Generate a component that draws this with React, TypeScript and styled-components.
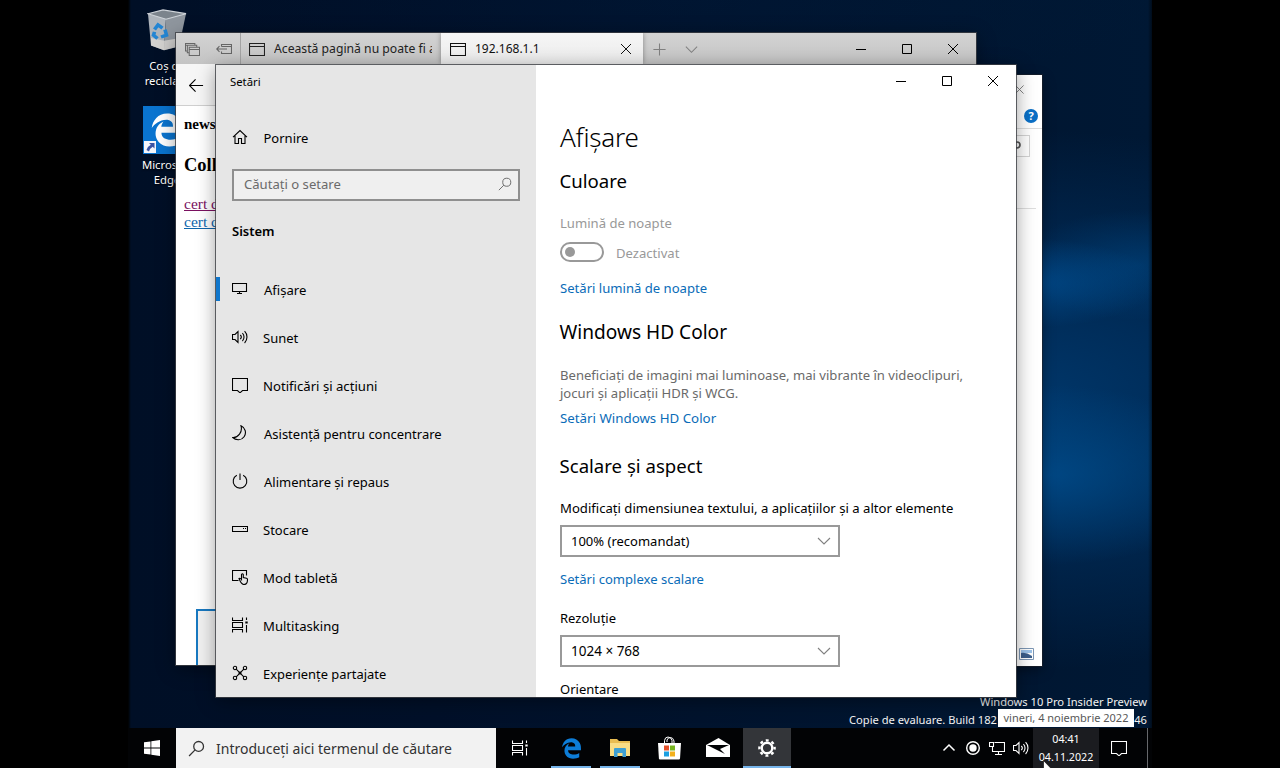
import React from "react";
import styled, { createGlobalStyle, css } from "styled-components";
import { FaEdgeLegacy } from "react-icons/fa6";

const Global = createGlobalStyle`
  * { box-sizing: border-box; }
  body { margin: 0; background: #000; overflow: hidden; }
  body, button, input { font-family: "Noto Sans", "Open Sans", sans-serif; font-size: 13px; }
`;

const Screen = styled.div`
  display: flex;
  justify-content: center;
  width: 1280px;
  height: 768px;
  background: #000;
`;

const Desktop = styled.main`
  position: relative;
  display: flex;
  flex-direction: column;
  justify-content: flex-end;
  width: 1024px;
  height: 768px;
  overflow: hidden;
  background:
    linear-gradient(90deg, #000 0, transparent 3px, transparent 1020px, rgba(0, 0, 0, 0.5) 1024px),
    radial-gradient(130px 45px at 900px 283px, rgba(0, 88, 162, 0.6), transparent),
    radial-gradient(120px 55px at 1010px 265px, rgba(0, 74, 136, 0.5), transparent),
    radial-gradient(190px 90px at 920px 475px, rgba(0, 84, 152, 0.65), transparent),
    radial-gradient(480px 270px at 900px 400px, rgba(0, 58, 112, 0.9), rgba(0, 50, 100, 0.6) 50%, transparent),
    radial-gradient(500px 90px at 560px 0, rgba(0, 32, 70, 0.2), transparent),
    linear-gradient(90deg, #000f26, #001029 30%, #001834 100%);
`;

const Shortcut = styled.div<{ $top: number }>`
  position: absolute;
  left: 2px;
  top: ${(p) => p.$top}px;
  width: 74px;
  display: flex;
  flex-direction: column;
  align-items: center;
  color: #fff;
  font-size: 11.3px;
  line-height: 15px;
  text-align: center;
  text-shadow: 0 1px 2px #000;
`;

const ShortcutArt = styled.div<{ $drop?: number }>`
  display: flex;
  justify-content: center;
  position: relative;
  width: 48px;
  height: 48px;
  padding-top: ${(p) => p.$drop ?? 0}px;
  margin-bottom: 3px;
`;

const EdgeTile = styled.div`
  width: 48px;
  height: 48px;
  display: flex;
  align-items: center;
  justify-content: center;
  background: #0a74cf;
  color: #fff;
`;

const LinkBadge = styled.div`
  position: absolute;
  left: 1px;
  bottom: 1px;
  width: 12px;
  height: 12px;
  display: flex;
  background: #f4f6fa;
`;

const Window = styled.section<{ $x: number; $y: number; $w: number; $h: number }>`
  position: absolute;
  left: ${(p) => p.$x}px;
  top: ${(p) => p.$y}px;
  width: ${(p) => p.$w}px;
  height: ${(p) => p.$h}px;
  overflow: hidden;
  display: flex;
  flex-direction: column;
  background: #fff;
  color: #000;
  box-shadow: 0 0 0 1px rgba(60, 63, 68, 0.8), 0 4px 18px rgba(0, 0, 0, 0.4);
`;

const BackWindow = styled(Window)`
  align-items: flex-end;
  box-shadow: 0 0 0 1px rgba(30, 34, 40, 0.6), 0 4px 12px rgba(0, 0, 0, 0.4);
`;

const PickerCaption = styled.div`
  height: 28px;
  padding: 8px 16px 0 0;
  color: #777;
  line-height: 0;
`;

const PickerHelp = styled.div`
  height: 26px;
  width: 100%;
  padding: 6px 4px 0;
  display: flex;
  justify-content: flex-end;
  border-bottom: 1px solid #dcdcdc;
`;

const HelpDot = styled.span`
  width: 14px;
  height: 14px;
  border-radius: 50%;
  background: #0a6fc6;
  color: #fff;
  font-weight: 700;
  font-size: 11px;
  line-height: 14px;
  text-align: center;
`;

const PickerSearch = styled.div`
  width: 200px;
  height: 22px;
  margin: 6px 12px 0 0;
  padding: 5px 8px 0 0;
  display: flex;
  justify-content: flex-end;
  border: 1px solid #d4d4d4;
`;

const PickerRule = styled.div`
  width: 220px;
  height: 52px;
  margin-right: 6px;
  border-bottom: 1px solid #dedede;
`;

const PickerFooter = styled.div`
  margin: auto 8px 6px 0;
  display: flex;
`;

const TabStrip = styled.div`
  height: 31px;
  flex: none;
  display: flex;
  background: linear-gradient(#d3d3d3, #c4c4c4);
`;

const StripTools = styled.div`
  width: 65px;
  display: flex;
  align-items: center;
  justify-content: space-between;
  padding: 1px 8px 0 9px;
  border-right: 1px solid #a3a3a3;
  color: #666;
`;

const Tab = styled.div<{ $active?: boolean }>`
  display: flex;
  align-items: center;
  width: ${(p) => (p.$active ? 202 : 200)}px;
  padding: 0 9px 0 ${(p) => (p.$active ? 9 : 8)}px;
  background: ${(p) => (p.$active ? "linear-gradient(#f6f6f6, #ebebeb)" : "transparent")};
  box-shadow: ${(p) => (p.$active ? "0 0 5px rgba(0, 0, 0, 0.35)" : "none")};
  color: ${(p) => (p.$active ? "#111" : "#222")};
`;

const TabTitle = styled.span<{ $size: number }>`
  flex: 1;
  margin: 0 0 1px 9px;
  font-size: ${(p) => p.$size}px;
  white-space: nowrap;
  overflow: hidden;
`;

const StripActions = styled.div`
  flex: 1;
  display: flex;
  align-items: center;
  gap: 17px;
  padding: 1px 0 0 9px;
  color: #808080;
`;

const CaptionButtons = styled.div`
  display: flex;
  align-items: center;
  height: 32px;
`;

const CaptionButton = styled.span`
  width: 46px;
  display: flex;
  justify-content: center;
`;

const EdgeToolbar = styled.div`
  height: 42px;
  flex: none;
  padding: 14px 0 0 13px;
  background: #f6f6f6;
  border-bottom: 1px solid #cfcfcf;
`;

const Page = styled.div`
  flex: 1;
  display: flex;
  flex-direction: column;
  align-items: flex-start;
  padding: 8px 8px 0;
  font-family: "Liberation Serif", serif;
`;

const PageLead = styled.strong`
  font-size: 15px;
  line-height: 20px;
`;

const PageTitle = styled.h2`
  margin: 20px 0 19px;
  font-size: 18.5px;
  line-height: 22px;
`;

const PageLink = styled.a<{ $visited?: boolean }>`
  font-size: 15.5px;
  line-height: 18px;
  text-decoration: underline;
  color: ${(p) => (p.$visited ? "#7a1060" : "#0f66ac")};
`;

const PageFrame = styled.div`
  width: 500px;
  height: 56px;
  margin: auto 0 0 12px;
  border: 2px solid #1878c0;
  border-bottom: 0;
  background: #f1f1f1;
`;

const Split = styled.div`
  flex: 1;
  display: flex;
  min-height: 0;
`;

const Nav = styled.nav`
  width: 320px;
  background: #e6e6e6;
  display: flex;
  flex-direction: column;
`;

const NavTitle = styled.div`
  height: 49px;
  flex: none;
  padding: 8px 14px 0;
  font-size: 11.3px;
  line-height: 17px;
`;

const NavItem = styled.div<{ $selected?: boolean; $indent?: number; $size?: number }>`
  height: 48px;
  flex: none;
  display: flex;
  align-items: center;
  padding-left: ${(p) => (p.$selected ? 0 : 16)}px;
  font-size: ${(p) => p.$size ?? 13}px;
  white-space: nowrap;

  ${(p) =>
    p.$selected &&
    css`
      &::before {
        content: "";
        width: 4px;
        height: 24px;
        margin: 0 12px 2px 0;
        background: #0f76cc;
      }
    `}

  svg {
    margin: 0 ${(p) => 15 + (p.$indent ?? 0)}px 2px 0;
  }
`;

const Search = styled.div`
  height: 32px;
  margin: 7px 16px 0;
  padding: 0 6px 2px 10px;
  display: flex;
  flex: none;
  align-items: center;
  justify-content: space-between;
  border: 2px solid #8f8f8f;
  background: #efefef;
  color: #6a6a6a;
  font-size: 13.1px;
`;

const NavHeading = styled.div`
  height: 65px;
  flex: none;
  padding: 20px 16px 0;
  line-height: 20px;
  font-weight: 600;
`;

const Content = styled.div`
  flex: 1;
  display: flex;
  flex-direction: column;
  align-items: flex-start;
`;

const ContentCaption = styled.div`
  width: 100%;
  display: flex;
  justify-content: flex-end;
`;

const Body = styled.div`
  display: flex;
  flex-direction: column;
  align-items: flex-start;
  padding: 22px 0 0 24px;
`;

const Title = styled.h1`
  margin: 0;
  font-size: 26px;
  font-weight: 350;
  letter-spacing: -0.2px;
  line-height: 36px;
`;

const Heading = styled.h2<{ $gap: number; $size?: number }>`
  margin: ${(p) => p.$gap}px 0 0 -0.5px;
  font-size: ${(p) => p.$size ?? 19}px;
  font-weight: 400;
  line-height: 26px;
`;

const Text = styled.div<{ $gap: number; $tone?: string; $size?: number; $leading?: number }>`
  margin-top: ${(p) => p.$gap}px;
  color: ${(p) => p.$tone ?? "#000"};
  font-size: ${(p) => p.$size ?? 13}px;
  line-height: ${(p) => p.$leading ?? 20}px;
  white-space: nowrap;
`;

const Action = styled(Text).attrs({ as: "a" })`
  color: #0a6cb8;
`;

const ToggleRow = styled.div`
  display: flex;
  gap: 12px;
  height: 20px;
  margin-top: 9px;
`;

const Toggle = styled.span`
  width: 44px;
  height: 20px;
  padding: 3px;
  border: 2px solid #999;
  border-radius: 10px;

  &::before {
    content: "";
    display: block;
    width: 10px;
    height: 10px;
    border-radius: 50%;
    background: #999;
  }
`;

const Select = styled.div<{ $size?: number }>`
  width: 280px;
  height: 32px;
  margin-top: 7px;
  padding: 0 6px 0 9px;
  display: flex;
  align-items: center;
  justify-content: space-between;
  border: 2px solid #999;
  color: #000;
  font-size: ${(p) => p.$size ?? 13}px;

  svg {
    color: #808080;
  }
`;

const Watermark = styled.div`
  width: 298px;
  align-self: flex-end;
  margin: 0 5px -1px 0;
  color: #f2f2f2;
  font-size: 11.15px;
  line-height: 18px;
  text-align: right;
  white-space: nowrap;
`;

const BuildLine = styled.div`
  display: flex;
  justify-content: space-between;
`;

const Taskbar = styled.footer`
  height: 40px;
  flex: none;
  display: flex;
  background: #020305;
  color: #fff;
`;

const StartButton = styled.div`
  width: 48px;
  display: flex;
  align-items: center;
  justify-content: center;
`;

const TaskSearch = styled.div`
  width: 320px;
  padding: 0 12px;
  display: flex;
  align-items: center;
  gap: 11px;
  background: #f2f2f2;
  color: #333;
  font-size: 14px;
  white-space: nowrap;
`;

const TaskButton = styled.div<{ $running?: boolean; $active?: boolean; $gap?: number }>`
  width: 48px;
  margin-left: ${(p) => p.$gap ?? 1}px;
  padding: ${(p) => (p.$active ? 0 : "0 4px")};
  display: flex;
  flex-direction: column;
  align-items: center;
  justify-content: space-between;
  background: ${(p) => (p.$active ? "#333539" : "transparent")};

  &::after {
    content: "";
    width: 100%;
    height: 2px;
    background: ${(p) => (p.$running ? "#76b4ea" : "transparent")};
  }
`;

const TaskGlyph = styled.span`
  flex: 1;
  display: flex;
  align-items: center;
  padding-top: 2px;
`;

const Tray = styled.div`
  margin-left: auto;
  display: flex;
  align-items: center;
`;

const TrayIcon = styled.span<{ $w?: number }>`
  width: ${(p) => p.$w ?? 24}px;
  display: flex;
  justify-content: center;
`;

const Clock = styled.div`
  width: 66px;
  height: 40px;
  padding-top: 2px;
  background: #1b1c20;
  text-align: center;
  font-size: 10.7px;
  line-height: 18px;
`;

const ShowDesktop = styled.div`
  width: 5px;
  height: 40px;
  margin-left: 8px;
  border-left: 1px solid #66686c;
`;

const Tooltip = styled.div`
  position: absolute;
  left: 870px;
  top: 709px;
  width: 136px;
  height: 18px;
  background: #fff;
  color: #575757;
  font-size: 11px;
  line-height: 17px;
  text-align: center;
  white-space: nowrap;
`;

const Cursor = styled.div`
  position: absolute;
  left: 915px;
  top: 760px;
  line-height: 0;
`;

const shapes: Record<string, React.ReactNode> = {
  home: <path d="M1 8.2 8 1.600l7 6.600M3 6.800v7.700h3.500V9.500h3v5H13V6.800" />,
  display: <path d="M.5 2.500h14v8H.5zM7.500 10.500v2M5 12.500h5" />,
  sound: <path d="M.5 5.500H3l3-3v11l-3-3H.5zM8.300 6a3 3 0 0 1 0 4.200M10.400 4.200a5.500 5.500 0 0 1 0 7.800M12.600 2.200a8.500 8.500 0 0 1 0 11.800" />,
  note: <path d="M.5 1.500h15v12h-5L8 15.800l-2.500-2.300h-5z" />,
  moon: <path d="M9 .8a7.300 7.300 0 1 1-8.200 11.700C6 12.900 10.800 7 9 .8z" />,
  power: <path d="M8 .5v6.500M4.800 2.300a6.800 6.800 0 1 0 6.400 0" />,
  storage: <path d="M.5 5.500h15v5H.5zM11 7.500h1M13 7.500h1" />,
  tablet: <path d="M6.500 11.500h-6v-10h14v5M7 9.500c1-.7 2 .300 2.500 1V5.500q.9-1.600 1.800 0v3l3.200.8q1 .300 1 1.200c0 3-.8 5-3.600 5S8.500 13 7 9.500z" />,
  multi: (
    <>
      <path d="M.5.500v3h10v-3M.5 15.500v-3h10v3M.5 5.500h10v5H.5zM14.500.500v2.500M14.500 8v7.500" />
      <path d="M13.300 4.500h2.400v2h-2.400z" fill="currentColor" stroke="none" />
    </>
  ),
  share: (
    <>
      <circle cx="3" cy="3" r="1.700" />
      <circle cx="13" cy="3" r="1.700" />
      <circle cx="3" cy="13" r="1.700" />
      <circle cx="13" cy="13" r="1.700" />
      <path d="m4.200 4.200 7.600 7.600M11.800 4.200l-7.600 7.600M7 7h2v2H7z" />
    </>
  ),
  search: (
    <>
      <circle cx="10" cy="6" r="4.600" />
      <path d="M6.700 9.300 1 15" />
    </>
  ),
  down: <path d="m2 5 6 6 6-6" />,
  up: <path d="m2.500 10.500 5.500-5.500 5.500 5.500" />,
  back: <path d="M.5 8H15M7 1.500.5 8 7 14.500" />,
  plus: <path d="M8 1.500v13M1.500 8h13" />,
  page: <path d="M.5 2.500h15v12H.5zM.5 5.500h15" />,
  tabs: <path d="M2.500 9.500h-2v-8h10v2M.5 3.500h2M4.500 11.500h-2v-8h10v2M4.500 5.500h11v9h-11zM4.500 8h11" />,
  aside: <path d="M5.500 5.500V3.500h10v9h-10v-2M5.500 5.500h10M.5 8H11M3.500 5.200.7 8l2.800 2.800" />,
  min: <path d="M3 8.500h10" />,
  max: <path d="M3.500 3.500h9v9h-9z" />,
  close: <path d="m3 3 10 10M13 3 3 13" />,
  network: <path d="M5.500 2.500h10v9H3.500v-5M9.500 11.500v3M6 14.500h7M.5 2.500h4v4h-4z" />,
  record: (
    <>
      <circle cx="8" cy="8" r="6.300" />
      <circle cx="8" cy="8" r="3" fill="currentColor" />
    </>
  ),
};

const Icon = ({ name, size = 16, width = 1.1 }: { name: string; size?: number; width?: number }) => (
  <svg width={size} height={size} viewBox="0 0 16 16" fill="none" stroke="currentColor" strokeWidth={width}>
    {shapes[name]}
  </svg>
);

const BinArt = () => (
  <svg width="40" height="43" viewBox="0 0 40 46" preserveAspectRatio="none">
    <path d="M1 5 19 10 17 44 4 39z" fill="#aeb4bb" />
    <path d="m19 10 20-5-7 35-15 4z" fill="#8f969e" />
    <path d="M1 5 16 1l23 4-20 6z" fill="#7c848c" stroke="#cfd4d9" strokeWidth="1.200" />
    <path d="m4 31 13 3v10L4 39zM17 34l16-3-1.500 9L17 44z" fill="#dcd9d6" opacity=".8" />
    <path
      d="m7.500 22 3.500-5 4.500 3.500M18 22l1.500 6-5.500 2M10.500 31.500 6.500 28l1-3.500"
      fill="none"
      stroke="#2385d3"
      strokeWidth="3.600"
    />
  </svg>
);

const GearArt = () => (
  <svg width="20" height="20" viewBox="0 0 20 20" fill="none" stroke="#fff">
    <circle cx="10" cy="10" r="5.300" strokeWidth="2.400" />
    <circle cx="10" cy="10" r="7.600" strokeWidth="2.400" strokeDasharray="2.900 3.069" strokeDashoffset="1.450" />
  </svg>
);

const FolderArt = () => (
  <svg width="22" height="20" viewBox="0 0 22 20">
    <path d="M1 1h7l2 2h11v15H1z" fill="#e9bd52" />
    <path d="M1 5h20v13H1z" fill="#f9dd85" />
    <path d="M5 19v-8q0-1 1-1h10q1 0 1 1v8h-3.500v-4h-5v4z" fill="#3d9fd3" />
  </svg>
);

const StoreArt = () => (
  <svg width="24" height="24" viewBox="0 0 24 24">
    <path d="M7.500 7V4.500Q8 1 11 1t4 3.500V7M10 6V4q1-2.500 3.500-2.500T17 5v2" fill="none" stroke="#fff" />
    <path d="M1 7h23l-1 15.500q-.2 1-1 1H3q-1 0-1.100-1z" fill="#fff" />
    <path d="M7 9.500h5v5H7z" fill="#e4502a" />
    <path d="M13 9.500h5v5h-5z" fill="#77b41f" />
    <path d="M7 15.500h5v5H7z" fill="#1d9fe0" />
    <path d="M13 15.500h5v5h-5z" fill="#f3b01c" />
  </svg>
);

const MailArt = () => (
  <svg width="24" height="20" viewBox="0 0 24 20">
    <path d="M0 7 12.500 0 24 7v12H0z" fill="#fff" />
    <path d="M1 7h22l-9 4 5 5z" fill="#020305" />
  </svg>
);

const WindowsArt = () => (
  <svg width="16" height="16" viewBox="0 0 16 16" fill="#fff">
    <path d="m0 2.300 6.500-.9v6.200H0zM7.300 1.300 16 0v7.600H7.300zM0 8.400h6.500v6.200L0 13.700zM7.300 8.400H16V16l-8.700-1.300z" />
  </svg>
);

const Caption = () => (
  <CaptionButtons>
    {["min", "max", "close"].map((name) => (
      <CaptionButton key={name}>
        <Icon name={name} width={1} />
      </CaptionButton>
    ))}
  </CaptionButtons>
);

const navItems = [
  { icon: "display", label: "Afișare", indent: 1, size: 13.1, selected: true },
  { icon: "sound", label: "Sunet" },
  { icon: "note", label: "Notificări și acțiuni", size: 13.15 },
  { icon: "moon", label: "Asistență pentru concentrare", indent: 1, size: 13 },
  { icon: "power", label: "Alimentare și repaus", indent: 1, size: 13 },
  { icon: "storage", label: "Stocare" },
  { icon: "tablet", label: "Mod tabletă", size: 13.2 },
  { icon: "multi", label: "Multitasking", size: 13.1 },
  { icon: "share", label: "Experiențe partajate", size: 12.9 },
];

const PickerWindow = () => (
  <BackWindow $x={600} $y={75} $w={314} $h={591}>
    <PickerCaption>
      <Icon name="close" size={13} width={1.1} />
    </PickerCaption>
    <PickerHelp>
      <HelpDot>?</HelpDot>
    </PickerHelp>
    <PickerSearch>
      <svg width="10" height="10" viewBox="0 0 10 10" fill="none" stroke="#555" strokeWidth="1.700">
        <circle cx="6" cy="4" r="3" />
        <path d="M4 6 1 9" />
      </svg>
    </PickerSearch>
    <PickerRule />
    <PickerFooter>
      <svg width="15" height="12" viewBox="0 0 15 12">
        <path d="M.5.500h14v11H.5z" fill="#fff" stroke="#7d97b5" />
        <path d="M2 2h11v3H2z" fill="#9cc3ea" />
        <path d="M2 5q5-1 11 3v2H2z" fill="#3c5f8c" />
      </svg>
    </PickerFooter>
  </BackWindow>
);

const EdgeWindow = () => (
  <Window $x={48} $y={33} $w={800} $h={632}>
    <TabStrip>
      <StripTools>
        <Icon name="tabs" size={15} />
        <Icon name="aside" />
      </StripTools>
      <Tab>
        <Icon name="page" />
        <TabTitle $size={12.2}>Această pagină nu poate fi afișată</TabTitle>
      </Tab>
      <Tab $active>
        <Icon name="page" />
        <TabTitle $size={12}>192.168.1.1</TabTitle>
        <Icon name="close" size={16} width={1} />
      </Tab>
      <StripActions>
        <Icon name="plus" size={15} />
        <Icon name="down" size={15} />
      </StripActions>
      <Caption />
    </TabStrip>
    <EdgeToolbar>
      <Icon name="back" size={15} width={1.2} />
    </EdgeToolbar>
    <Page>
      <PageLead>news</PageLead>
      <PageTitle>Coll</PageTitle>
      <PageLink $visited>cert de</PageLink>
      <PageLink>cert de</PageLink>
      <PageFrame />
    </Page>
  </Window>
);

const SettingsWindow = () => (
  <Window $x={88} $y={65} $w={800} $h={632}>
    <Split>
      <Nav>
        <NavTitle>Setări</NavTitle>
        <NavItem $indent={0.5}>
          <Icon name="home" />
          Pornire
        </NavItem>
        <Search>
          Căutați o setare
          <Icon name="search" size={14} />
        </Search>
        <NavHeading>Sistem</NavHeading>
        {navItems.map((item) => (
          <NavItem key={item.label} $selected={item.selected} $indent={item.indent} $size={item.size}>
            <Icon name={item.icon} />
            {item.label}
          </NavItem>
        ))}
      </Nav>
      <Content>
        <ContentCaption>
          <Caption />
        </ContentCaption>
        <Body>
          <Title>Afișare</Title>
          <Heading $gap={13} $size={18.6}>Culoare</Heading>
          <Text $gap={19} $tone="#999" $size={13.1}>Lumină de noapte</Text>
          <ToggleRow>
            <Toggle />
            <Text $gap={1} $tone="#999" $size={13.1}>Dezactivat</Text>
          </ToggleRow>
          <Action $gap={16} $size={13.1}>Setări lumină de noapte</Action>
          <Heading $gap={21} $size={19.1}>Windows HD Color</Heading>
          <Text $gap={21} $tone="#6a6a6a" $size={13.08} $leading={18}>
            Beneficiați de imagini mai luminoase, mai vibrante în videoclipuri,
            <br />
            jocuri și aplicații HDR și WCG.
          </Text>
          <Action $gap={6} $size={13.3}>Setări Windows HD Color</Action>
          <Heading $gap={25} $size={18.6}>Scalare și aspect</Heading>
          <Text $gap={19} $size={13.12}>Modificați dimensiunea textului, a aplicațiilor și a altor elemente</Text>
          <Select>
            100% (recomandat)
            <Icon name="down" />
          </Select>
          <Action $gap={12} $size={13.05}>Setări complexe scalare</Action>
          <Text $gap={19}>Rezoluție</Text>
          <Select $size={13.5}>
            1024 × 768
            <Icon name="down" />
          </Select>
          <Text $gap={12}>Orientare</Text>
        </Body>
      </Content>
    </Split>
  </Window>
);

export default function App() {
  return (
    <Screen>
      <Global />
      <Desktop>
        <Shortcut $top={7}>
          <ShortcutArt $drop={2}>
            <BinArt />
          </ShortcutArt>
          Coș de reciclare
        </Shortcut>
        <Shortcut $top={106}>
          <ShortcutArt>
            <EdgeTile>
              <FaEdgeLegacy size={34} />
            </EdgeTile>
            <LinkBadge>
              <svg width="12" height="12" viewBox="0 0 12 12">
                <path d="M5 2h5.500v5.500L8.700 5.700Q5.500 7.500 5 10.500L2.500 9Q3.500 5.500 6.800 3.800z" fill="#3953a4" />
              </svg>
            </LinkBadge>
          </ShortcutArt>
          Microsoft Edge
        </Shortcut>

        <PickerWindow />
        <EdgeWindow />
        <SettingsWindow />

        <Watermark>
          <div>Windows 10 Pro Insider Preview</div>
          <BuildLine>
            <span>Copie de evaluare. Build 182</span>
            <span>46</span>
          </BuildLine>
        </Watermark>

        <Taskbar>
          <StartButton>
            <WindowsArt />
          </StartButton>
          <TaskSearch>
            <Icon name="search" size={17} width={1.2} />
            Introduceți aici termenul de căutare
          </TaskSearch>
          <TaskButton $gap={0}>
            <TaskGlyph>
              <Icon name="multi" />
            </TaskGlyph>
          </TaskButton>
          <TaskButton $running $gap={3}>
            <TaskGlyph>
              <FaEdgeLegacy size={21} color="#0d7dd8" />
            </TaskGlyph>
          </TaskButton>
          <TaskButton $running>
            <TaskGlyph>
              <FolderArt />
            </TaskGlyph>
          </TaskButton>
          <TaskButton>
            <TaskGlyph>
              <StoreArt />
            </TaskGlyph>
          </TaskButton>
          <TaskButton>
            <TaskGlyph>
              <MailArt />
            </TaskGlyph>
          </TaskButton>
          <TaskButton $running $active>
            <TaskGlyph>
              <GearArt />
            </TaskGlyph>
          </TaskButton>
          <Tray>
            <TrayIcon>
              <Icon name="up" width={1.5} />
            </TrayIcon>
            <TrayIcon>
              <Icon name="record" width={1.4} />
            </TrayIcon>
            <TrayIcon>
              <Icon name="network" />
            </TrayIcon>
            <TrayIcon>
              <Icon name="sound" />
            </TrayIcon>
            <Clock>
              <div>04:41</div>
              <div>04.11.2022</div>
            </Clock>
            <TrayIcon $w={40}>
              <Icon name="note" />
            </TrayIcon>
            <ShowDesktop />
          </Tray>
        </Taskbar>

        <Tooltip>vineri, 4 noiembrie 2022</Tooltip>
        <Cursor>
          <svg width="12" height="19" viewBox="0 0 12 19">
            <path d="M.5.500v16l3.700-3.500 2.500 5.500 2.300-1-2.500-5.500h5z" fill="#fff" stroke="#000" strokeWidth=".6" />
          </svg>
        </Cursor>
      </Desktop>
    </Screen>
  );
}
